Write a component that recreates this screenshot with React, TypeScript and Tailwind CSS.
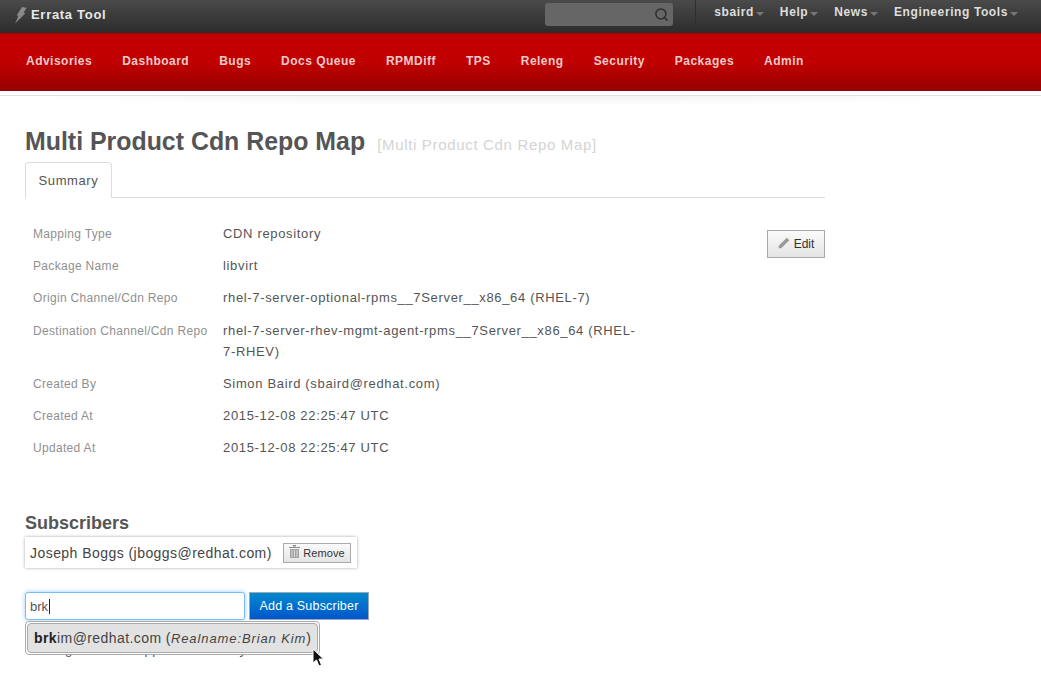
import React from 'react';
import { Search } from 'lucide-react';

const navItems = ['Advisories', 'Dashboard', 'Bugs', 'Docs Queue', 'RPMDiff', 'TPS', 'Releng', 'Security', 'Packages', 'Admin'];
const userItems = ['sbaird', 'Help', 'News', 'Engineering Tools'];

const details: [string, string][] = [
  ['Mapping Type', 'CDN repository'],
  ['Package Name', 'libvirt'],
  ['Origin Channel/Cdn Repo', 'rhel-7-server-optional-rpms__7Server__x86_64 (RHEL-7)'],
  ['Destination Channel/Cdn Repo', 'rhel-7-server-rhev-mgmt-agent-rpms__7Server__x86_64 (RHEL-7-RHEV)'],
  ['Created By', 'Simon Baird (sbaird@redhat.com)'],
  ['Created At', '2015-12-08 22:25:47 UTC'],
  ['Updated At', '2015-12-08 22:25:47 UTC'],
];

function Bolt() {
  return (
    <svg width="13" height="17" viewBox="0 0 13 17" className="mr-[4px] mt-[-2px]">
      <path d="M8 0 L12.5 0.8 L9.5 6 L11.5 6.3 L1 16.5 L4.5 8.8 L2.6 8.5 Z" fill="#8a8a8a" />
    </svg>
  );
}

function Pencil() {
  return (
    <svg width="13" height="13" viewBox="0 0 13 13" className="mr-[3px] mt-[-3px]">
      <path d="M1 9.5 L8.8 1.7 L11.3 4.2 L3.5 12 L0.6 12.4 Z" fill="#9a9a9a" />
    </svg>
  );
}

function Trash() {
  return (
    <svg width="11" height="13" viewBox="0 0 11 13" className="mr-[3px] mt-[-2px]">
      <path d="M0 2h11v1H0z M4 0h3v1.5H4z" fill="#8c8c8c" />
      <path d="M1 4h9v9H1z" fill="#a3a3a3" />
      <path d="M3 5v7 M5.5 5v7 M8 5v7" stroke="#e8e8e8" strokeWidth="0.8" />
    </svg>
  );
}

function Cursor() {
  return (
    <svg width="13" height="20" viewBox="0 0 13 20" className="absolute left-[312px] top-[648px]">
      <path d="M1 1 L1 15 L4.5 12 L7 18 L9.5 17 L7 11 L11.5 11 Z" fill="#111" stroke="#fff" strokeWidth="1" />
    </svg>
  );
}

export default function App() {
  return (
    <div className="relative h-[673px] w-[1041px] overflow-hidden bg-white font-['Liberation_Sans',sans-serif] text-[#555]">
      {/* top bar */}
      <div className="flex h-[33px] items-center bg-gradient-to-b from-[#4a4a4a] to-[#2c2c2c] pl-[14px]">
        <Bolt />
        <span className="mt-[-3px] text-[13px] font-bold tracking-[0.7px] text-[#e8e8e8]">Errata Tool</span>
        <div className="ml-auto mt-[-5px] flex h-[23px] w-[128px] items-center justify-end rounded-[3px] bg-[#666] pr-[4px]">
          <Search size={15} strokeWidth={2.4} className="text-[#2e2e2e]" />
        </div>
        <div className="ml-[22px] h-[28px] w-px self-start bg-[#2e2e2e]" />
        <div className="flex h-full gap-[16px] pl-[18px] pr-[23px]">
          {userItems.map(item => (
            <div key={item} className="mt-[5px] flex h-[14px] items-center text-[12px] font-bold tracking-[0.6px] text-[#dedede]">
              {item}
              <span className="ml-[2px] mt-[3px] h-0 w-0 border-x-[4px] border-t-[4px] border-x-transparent border-t-[#777]" />
            </div>
          ))}
        </div>
      </div>

      {/* red nav */}
      <div className="flex h-[58px] items-center gap-[30px] border-t border-[#a80000] bg-gradient-to-b from-[#c60000] via-[#c00000] to-[#980000] pl-[26px]">
        {navItems.map(item => (
          <span key={item} className="mt-[-4px] text-[12px] font-bold tracking-[0.48px] text-[#efcaca]">{item}</span>
        ))}
      </div>

      {/* thin rule below nav */}
      <div className="mt-[4px] h-px bg-[#e2e2e2]" />
      <div className="h-[10px] bg-[radial-gradient(ellipse_at_top,#f2f2f2,#ffffff_70%)]" />

      <div className="ml-[25px] w-[800px]">
        <div className="mt-[18px] flex items-baseline">
          <h1 className="text-[24.9px] font-bold leading-[34px] text-[#555]">Multi Product Cdn Repo Map</h1>
          <span className="ml-[12px] text-[15px] tracking-[0.67px] text-[#d4d4d4]">[Multi Product Cdn Repo Map]</span>
        </div>

        <div className="mt-[4px] flex h-[36px] border-b border-[#ddd]">
          <div className="flex h-[36px] w-[87px] items-center justify-center rounded-t-[4px] border border-b-0 border-[#ddd] bg-white text-[13px] tracking-[0.6px] text-[#555]">
            Summary
          </div>
        </div>

        <div className="relative mt-[25px] pl-[8px]">
          {details.map(([label, value]) => (
            <div key={label} className="flex pb-[11.2px]">
              <div className="w-[190px] shrink-0 pt-[2px] text-[12px] leading-[19px] tracking-[0.32px] text-[#909090]">{label}</div>
              <div className="w-[420px] text-[13px] leading-[21px] tracking-[0.66px] text-[#555]">{value}</div>
            </div>
          ))}
          <button className="absolute right-0 top-[7px] flex h-[28px] w-[58px] items-center justify-center border border-[#aaa] bg-gradient-to-b from-[#fafafa] to-[#e4e4e4] text-[12px] text-[#333]">
            <Pencil />
            Edit
          </button>
        </div>
      </div>

      <div className="ml-[25px] mt-[43px]">
        <h2 className="text-[18px] font-bold leading-[22px] text-[#555]">Subscribers</h2>
        <div className="mt-[3px] flex h-[31px] w-[332px] items-center justify-between bg-white pl-[5px] pr-[6px] shadow-[0_0_3px_rgba(0,0,0,0.35)]">
          <span className="pt-[1px] text-[14px] tracking-[0.45px] text-[#444]">Joseph Boggs (jboggs@redhat.com)</span>
          <button className="flex h-[20px] w-[68px] items-center justify-center border border-[#aaa] bg-gradient-to-b from-[#fafafa] to-[#e4e4e4] text-[11px] tracking-[0.1px] text-[#333]">
            <Trash />
            Remove
          </button>
        </div>

        <div className="mt-[24px] flex h-[28px] items-center gap-[4px]">
          <div className="flex h-[28px] w-[220px] items-center rounded-[3px] border border-[#7cbcf0] bg-white pl-[4px] text-[13px] text-[#555] shadow-[0_0_4px_rgba(82,168,236,0.6)]">
            brk
            <span className="ml-[1px] h-[15px] w-px bg-[#222]" />
          </div>
          <button className="h-[28px] w-[120px] border border-[#9aa9b5] bg-gradient-to-b from-[#0088cc] to-[#0055cc] text-[12.5px] tracking-[0.2px] text-white">
            Add a Subscriber
          </button>
        </div>

        <div className="relative mt-[1px] h-[45px]">
          <p className="pt-[20px] text-[13px] leading-[18px] tracking-[0.4px] text-[#555]">Users get mail on approval of it only</p>
          <div className="absolute left-0 top-0 w-[295px] rounded-[4px] border border-[#aaa] bg-white p-[1px]">
            <div className="flex h-[30px] items-center rounded-[4px] border border-[#aaa] bg-[#e2e2e2] pl-[6px] pt-[1px] text-[14px] tracking-[0.42px] text-[#444]">
              <b className="text-[#222]">brk</b>im@redhat.com (<i className="text-[13px] tracking-[0.9px]">Realname:Brian Kim</i>)
            </div>
          </div>
        </div>
      </div>

      <Cursor />
    </div>
  );
}
